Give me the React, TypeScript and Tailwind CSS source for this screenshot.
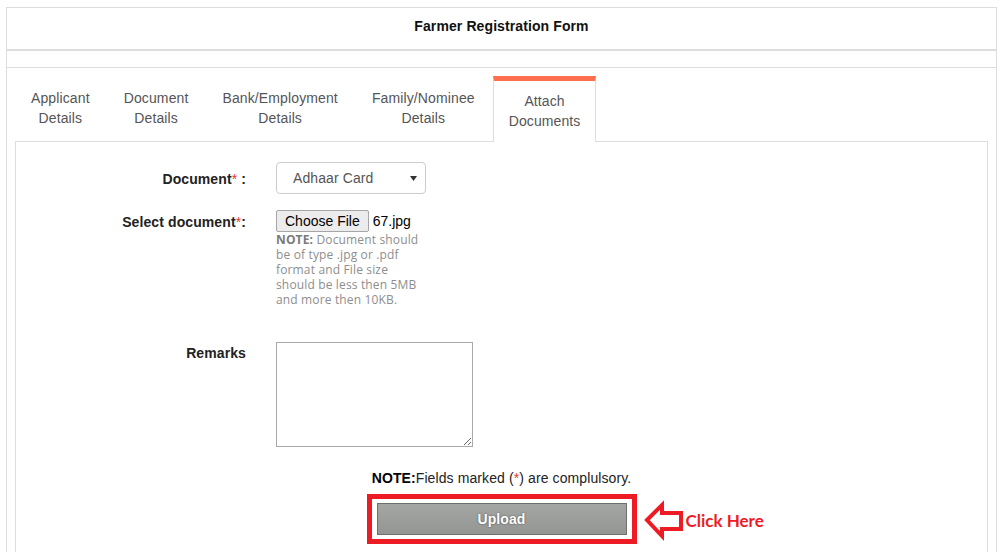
import React from 'react';

const tabs = [
  { top: 'Applicant', bottom: 'Details' },
  { top: 'Document', bottom: 'Details' },
  { top: 'Bank/Employment', bottom: 'Details' },
  { top: 'Family/Nominee', bottom: 'Details' },
];

function Star() {
  return <span className="text-[#e8362b] font-normal">*</span>;
}

export default function App() {
  return (
    <div className="min-h-screen bg-white px-[6px] pt-[7px] font-['Liberation_Sans',Arial,sans-serif] text-[14px] leading-[20px] tracking-[0.1px] text-[#222]">
      <div className="border border-[#dddddd]">
        {/* Title row */}
        <div className="h-[43px] border-b-2 border-[#dddddd] pt-[8px] text-center font-bold text-[#111]">
          Farmer Registration Form
        </div>
        <div className="h-[17px] border-b border-[#dddddd]" />

        <div className="px-[8px] pt-[8px]">
          {/* Tabs */}
          <div className="flex items-start">
            {tabs.map((t) => (
              <div
                key={t.top}
                className="mr-[2px] whitespace-nowrap border border-transparent px-[15px] pt-[11px] pb-[10px] text-center tracking-[0.12px] text-[#555]"
              >
                {t.top}
                <br />
                {t.bottom}
              </div>
            ))}
            <div className="relative z-10 whitespace-nowrap border-x border-t-[5px] border-x-[#dddddd] border-t-[#fd6e4f] bg-white px-[15px] pt-[10px] pb-[11px] text-center tracking-[0.1px] text-[#555]">
              Attach
              <br />
              Documents
            </div>
          </div>

          {/* Tab panel */}
          <div className="-mt-px border border-[#dddddd] bg-white pt-[20px] pb-[40px]">
            <div className="flex">
              <div className="w-[230px] pt-[7px] text-right font-bold">
                Document<Star /> :
              </div>
              <div className="ml-[30px] flex h-[32px] w-[150px] items-center justify-between rounded-[4px] border border-[#cccccc] pl-[16px] pr-[8px] text-[#555]">
                <span>Adhaar Card</span>
                <svg width="7" height="5" viewBox="0 0 7 5">
                  <polygon points="0,0 7,0 3.5,5" fill="#333" />
                </svg>
              </div>
            </div>

            <div className="mt-[16px] flex">
              <div className="w-[230px] pt-[2px] text-right font-bold">
                Select document<Star />:
              </div>
              <div className="ml-[30px]">
                <div className="flex items-center">
                  <div className="h-[22px] rounded-[2px] border border-[#a6a6a6] bg-[#ececec] px-[8px] leading-[20px] tracking-normal text-black">
                    Choose File
                  </div>
                  <span className="ml-[4px] tracking-normal text-black">67.jpg</span>
                </div>
                <div className="font-['Open_Sans',sans-serif] text-[12px] leading-[15px] tracking-[0.15px] text-[#8e8e8e]">
                  <b className="font-bold text-[#7a7a7a]">NOTE:</b> Document should
                  <br />
                  be of type .jpg or .pdf
                  <br />
                  format and File size
                  <br />
                  should be less then 5MB
                  <br />
                  and more then 10KB.
                </div>
              </div>
            </div>

            <div className="mt-[35px] flex">
              <div className="w-[230px] pt-px text-right font-bold">Remarks</div>
              <textarea className="ml-[30px] block h-[105px] w-[197px] resize border border-[#a9a9a9] bg-white" />
            </div>

            <div className="mt-[21px] text-center text-[#222]">
              <b className="text-black">NOTE:</b>Fields marked (<span className="text-[#e8362b]">*</span>) are complulsory.
            </div>

            <div className="relative mx-auto mt-[6px] w-[270px] border-[5px] border-[#ed1c24] px-[5px] py-[4px]">
              <button className="block h-[32px] w-full border border-[#6b716d] bg-[linear-gradient(#a3a6a3,#939693)] font-bold text-white [text-shadow:0_0_2px_rgba(0,0,0,0.55)]">
                Upload
              </button>
              {/* annotation */}
              <div className="absolute left-[270px] top-[1px] flex items-center">
                <svg width="44" height="42" viewBox="0 0 44 42">
                  <polygon
                    points="5,20 20,5 20,13 39,13 39,29 20,29 20,36"
                    fill="none"
                    stroke="#ed1c24"
                    strokeWidth="4"
                    strokeLinejoin="miter"
                  />
                </svg>
                <span className="whitespace-nowrap font-['Lato',sans-serif] text-[17px] font-bold tracking-normal text-[#ed1c24]">
                  Click Here
                </span>
              </div>
            </div>
          </div>
        </div>
      </div>
    </div>
  );
}
